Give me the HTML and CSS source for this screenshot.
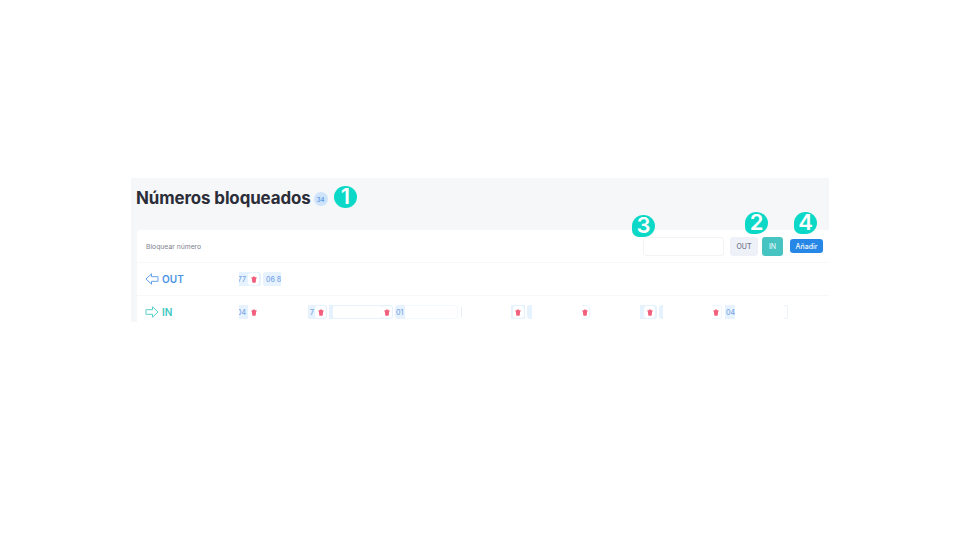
FILE: index.html
```html
<!DOCTYPE html>
<html lang="es">
<head>
<meta charset="utf-8">
<title>Números bloqueados</title>
<link rel="stylesheet" href="styles.css">
</head>
<body>
<svg class="defs" width="0" height="0" aria-hidden="true">
  <symbol id="t" viewBox="0 0 8 9"><path d="M.6 1.600 2.400 1.500 3 .5H5L5.600 1.500 7.400 1.600V3H6.900L6.300 8.300Q6.200 8.800 5.700 8.800H2.300Q1.800 8.800 1.700 8.300L1.100 3H.6z"/></symbol>
</svg>
<main class="panel">
  <header class="head">
    <h1>Números bloqueados</h1>
    <span class="count">34</span>
    <span class="pin pin-1">1</span>
  </header>
  <section class="card">
    <div class="row top">
      <span class="label">Bloquear número</span>
      <div class="controls">
        <span class="pin pin-3">3</span>
        <input class="field" type="text" aria-label="Bloquear número">
        <button class="seg out-btn">OUT</button>
        <button class="seg in-btn">IN</button>
        <span class="pin pin-2">2</span>
        <button class="add">Añadir</button>
        <span class="pin pin-4">4</span>
      </div>
    </div>
    <div class="row list">
      <div class="dir out">
        <svg class="arrow" viewBox="0 0 14 12" width="14" height="12"><path d="M6.500 .8 1 6l5.500 5.200V8.300H13V3.700H6.500z" fill="none" stroke="currentColor" stroke-width="1" stroke-linejoin="round"/></svg>
        <span>OUT</span>
      </div>
      <div class="chips">
        <span class="chip c-22 round"><span class="num">77</span><span class="box"><svg class="trash"><use href="#t"/></svg></span></span>
        <span class="chip c-18 gap-2 round-l"><span class="txt">06 8</span></span>
      </div>
    </div>
    <div class="row list last">
      <div class="dir in">
        <svg class="arrow" viewBox="0 0 14 12" width="14" height="12"><path d="M7.500 .8 13 6l-5.500 5.200V8.300H1V3.700h6.500z" fill="none" stroke="currentColor" stroke-width="1" stroke-linejoin="round"/></svg>
        <span>IN</span>
      </div>
      <div class="chips">
        <span class="chip c-19 open"><span class="num">04</span><span class="box"><svg class="trash"><use href="#t"/></svg></span></span>
        <span class="chip c-19 gap-50 round n6"><span class="num">7</span><span class="box"><svg class="trash"><use href="#t"/></svg></span></span>
        <span class="chip c-64 gap-2 round"><span class="mask"></span><span class="box"><svg class="trash"><use href="#t"/></svg></span></span>
        <span class="chip c-10 gap-2 round-l"><span class="txt t0">01</span></span>
        <span class="ghost"></span>
        <span class="tick"></span>
        <span class="chip c-14 gap-49 centered"><span class="box"><svg class="trash"><use href="#t"/></svg></span></span>
        <span class="chip c-5 gap-2 round-l"></span>
        <span class="tailbox tb-a gap-50"><svg class="trash"><use href="#t"/></svg></span>
        <span class="chip c-17 gap-50 end round"><span class="box"><svg class="trash"><use href="#t"/></svg></span></span>
        <span class="chip c-4 gap-2 round-l"></span>
        <span class="tailbox tb-b gap-49"><svg class="trash"><use href="#t"/></svg></span>
        <span class="chip c-10 gap-3"><span class="txt t0">04</span></span>
        <span class="sliver"></span>
      </div>
    </div>
  </section>
</main>
</body>
</html>
```
FILE: styles.css
```css
* { box-sizing: border-box; }
html, body { margin: 0; background: #fff; }
body { padding: 178px 131px 0; font-family: "Inter", "Liberation Sans", sans-serif; }
.defs { position: absolute; }
.panel { position: relative; width: 698px; height: 144px; overflow: hidden; background: #f6f7f9; }
.head { display: flex; align-items: center; height: 40px; margin-bottom: 12px; padding-left: 5px; position: relative; }
h1 { margin: 0; font-size: 16.900px; font-weight: 700; color: #2b2d38; letter-spacing: -.1px; white-space: nowrap; }
.count { margin: 2px 0 0 3px; width: 14px; height: 14px; border-radius: 50%; background: #cfe4fb; color: #5b9be6; font-size: 6px; font-weight: 600; display: flex; align-items: center; justify-content: center; }
.card { margin-left: 6px; background: #fff; border-radius: 4px 0 0 0; height: 92px; }
.row { display: flex; align-items: center; border-bottom: 1px solid #f7f8fa; }
.top { height: 33px; padding: 0 6px 0 9px; justify-content: space-between; }
.label { font-size: 6.800px; color: #7f838f; }
.controls { display: flex; align-items: center; }
.field { width: 81px; height: 19px; border: 1px solid #f3f4f6; border-radius: 3px; background: #fff; margin-right: 6px; padding: 0; }
.seg { height: 19px; border: 0; border-radius: 3px; font: 500 7px "Inter", "Liberation Sans", sans-serif; padding: 0; }
.out-btn { width: 28px; background: #eff1f8; color: #737a8c; }
.in-btn { width: 21px; margin: 0 7px 0 4px; background: #47c4c1; color: #dff5f4; }
.add { width: 33px; height: 14px; border: 0; border-radius: 3px; background: #2687e6; color: #f2f8fe; font: 500 7px "Inter", "Liberation Sans", sans-serif; padding: 0; }
.list { height: 33px; }
.last { border-bottom: 0; height: 32px; }
.dir { width: 93px; padding-left: 8px; display: flex; align-items: center; gap: 3px; font-size: 10px; font-weight: 600; letter-spacing: .1px; }
.out { color: #4a94e6; }
.in { color: #3cc8c0; }
.arrow { opacity: .85; }
.chips { display: flex; align-items: center; height: 14px; margin-left: 9px; }
.chip { display: flex; align-items: center; flex: none; height: 14px; overflow: hidden; white-space: nowrap; background: #e6f2fd; color: #7aa6e6; font-size: 7px; font-weight: 500; }
.round { border-radius: 0 3px 3px 0; }
.round-l { border-radius: 3px 0 0 3px; }
.open { background: linear-gradient(90deg, #e6f2fd 9px, #fff 9px); }
.num { display: flex; justify-content: flex-end; width: 9px; padding-right: 2px; overflow: hidden; flex: none; }
.n6 .num { width: 7px; padding-right: 1px; }
.txt { padding-left: 3px; }
.t0 { padding-left: 1px; }
.box { display: flex; align-items: center; justify-content: center; flex: none; width: 11px; height: 12px; background: #fff; border-radius: 3px; }
.trash { width: 6px; height: 7px; fill: #f2607e; }
.mask { width: 48px; height: 12px; margin: 0 0 0 4px; background: #fff; flex: none; border-radius: 2px 0 0 2px; }
.c-4 { width: 4px; }
.c-5 { width: 5px; }
.c-10 { width: 10px; }
.c-14 { width: 14px; }
.c-17 { width: 17px; }
.c-18 { width: 18px; }
.c-19 { width: 19px; }
.c-22 { width: 22px; }
.c-64 { width: 64px; }
.centered { justify-content: center; }
.end { justify-content: flex-end; padding-right: 2px; }
.gap-2 { margin-left: 2px; }
.gap-3 { margin-left: 3px; }
.gap-49 { margin-left: 49px; }
.gap-50 { margin-left: 50px; }
.ghost { width: 53px; height: 14px; background: #fff; border: 1px solid #f4f9fe; border-left: 0; border-radius: 0 3px 3px 0; flex: none; }
.tick { width: 1px; height: 10px; margin-left: 3px; background: #e4eef8; flex: none; }
.tailbox { display: flex; align-items: center; flex: none; height: 14px; background: #fff; border: 1px solid #eef6fd; border-left: 0; border-radius: 0 3px 3px 0; }
.tb-a { width: 8px; }
.tb-b { width: 10px; padding-left: 1px; }
.sliver { width: 4px; height: 14px; margin-left: 49px; background: #fff; border: 1px solid #eef3fb; border-left: 0; border-radius: 0 3px 3px 0; flex: none; }
.pin { position: absolute; display: flex; align-items: center; justify-content: center; width: 23px; height: 22px; padding-bottom: 3px; background: #0bd8c6; border-radius: 50%; color: #fff; font-size: 22px; font-weight: 600; line-height: 1; }
.pin-1 { left: 203px; top: 8px; }
.pin-3 { left: 501px; top: 37px; border-bottom-left-radius: 7px; }
.pin-2 { left: 614px; top: 34px; border-bottom-left-radius: 7px; }
.pin-4 { left: 663px; top: 34px; border-bottom-left-radius: 7px; }
```
